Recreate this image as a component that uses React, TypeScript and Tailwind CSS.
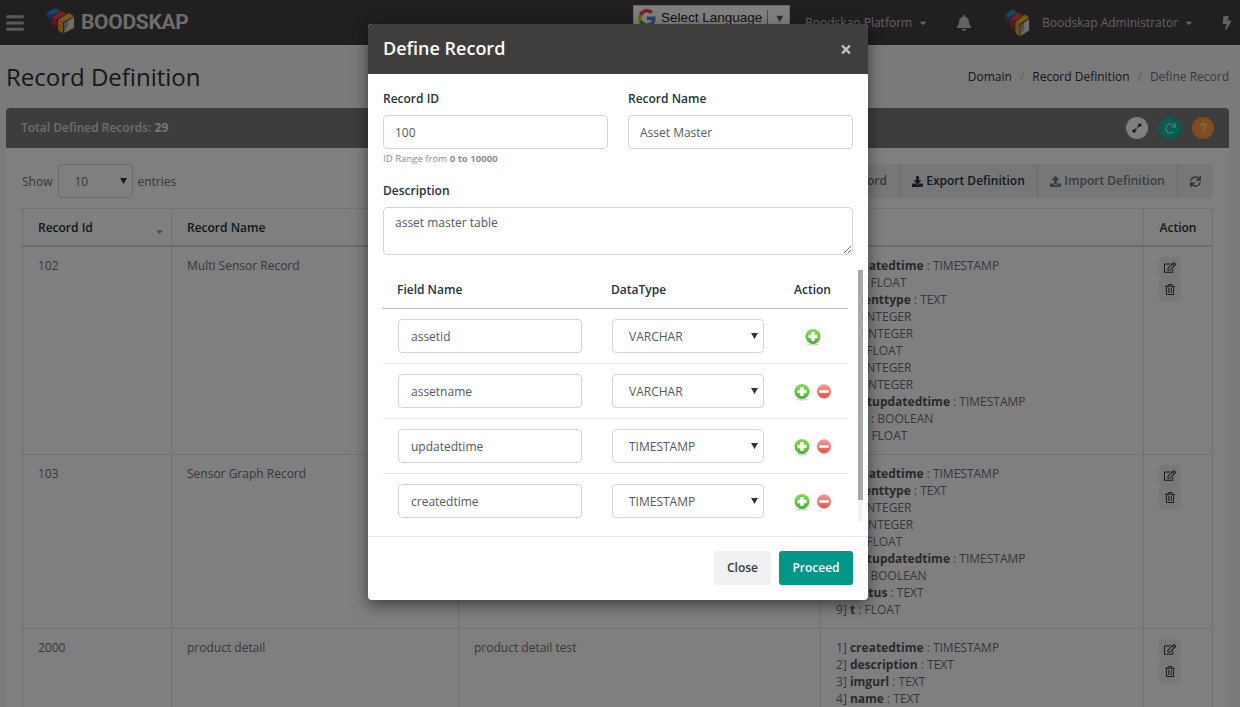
import React from 'react';
import { FaBars, FaBell, FaBolt, FaCaretDown, FaDownload, FaExpandAlt, FaQuestion, FaRedo, FaRegEdit, FaRegTrashAlt, FaSortDown, FaSync, FaTimes, FaUpload } from 'react-icons/fa';

type Field = [string, string];

const rows: { id: string; name: string; desc: string; fields: Field[] }[] = [
  {
    id: '102',
    name: 'Multi Sensor Record',
    desc: 'multi sensor record',
    fields: [
      ['createdtime', 'TIMESTAMP'],
      ['st', 'FLOAT'],
      ['eventtype', 'TEXT'],
      ['i', 'INTEGER'],
      ['r', 'INTEGER'],
      ['x', 'FLOAT'],
      ['i', 'INTEGER'],
      ['r', 'INTEGER'],
      ['lastupdatedtime', 'TIMESTAMP'],
      ['st', 'BOOLEAN'],
      ['t', 'FLOAT'],
    ],
  },
  {
    id: '103',
    name: 'Sensor Graph Record',
    desc: 'sensor graph record',
    fields: [
      ['createdtime', 'TIMESTAMP'],
      ['eventtype', 'TEXT'],
      ['i', 'INTEGER'],
      ['r', 'INTEGER'],
      ['x', 'FLOAT'],
      ['lastupdatedtime', 'TIMESTAMP'],
      ['st', 'BOOLEAN'],
      ['status', 'TEXT'],
      ['t', 'FLOAT'],
    ],
  },
  {
    id: '2000',
    name: 'product detail',
    desc: 'product detail test',
    fields: [
      ['createdtime', 'TIMESTAMP'],
      ['description', 'TEXT'],
      ['imgurl', 'TEXT'],
      ['name', 'TEXT'],
      ['price', 'FLOAT'],
    ],
  },
];

const defineFields = [
  { name: 'assetid', type: 'VARCHAR', first: true },
  { name: 'assetname', type: 'VARCHAR', first: false },
  { name: 'updatedtime', type: 'TIMESTAMP', first: false },
  { name: 'createdtime', type: 'TIMESTAMP', first: false },
];

function Logo({ className }: { className: string }) {
  return (
    <svg viewBox="0 0 29 26" preserveAspectRatio="none" className={className}>
      <polygon points="0,5 9,0 14,3 5,8" fill="#2f8fd0" />
      <polygon points="0,5 5,8 5,12 0,9" fill="#1e6aa0" />
      <polygon points="6,9 15,3 21,6 11,11" fill="#e8404a" />
      <polygon points="6,9 11,11 11,19 6,16" fill="#c9303c" />
      <polygon points="12,12 23,5 28,8 17,14" fill="#f0b429" />
      <polygon points="12,12 17,14 17,26 12,22" fill="#e0a020" />
      <polygon points="18,15 28,9 28,20 18,25" fill="#d8d8d8" />
      <polygon points="18,15 22,13 22,18 18,25" fill="#9a9a9a" />
    </svg>
  );
}

function GoogleG() {
  return (
    <svg viewBox="0 0 48 48" className="w-[18px] h-[18px]">
      <path fill="#EA4335" d="M24 9.5c3.5 0 6.700 1.200 9.200 3.600l6.900-6.900C35.900 2.400 30.500 0 24 0 14.600 0 6.500 5.400 2.600 13.200l8 6.200C12.500 13.700 17.800 9.500 24 9.500z" />
      <path fill="#4285F4" d="M47 24.500c0-1.600-.1-3.100-.4-4.500H24v9h12.900c-.6 3-2.200 5.500-4.700 7.200l7.700 6C44.400 38.300 47 32 47 24.500z" />
      <path fill="#FBBC05" d="M10.600 28.600c-.5-1.400-.8-3-.8-4.600s.3-3.200.8-4.600l-8-6.200C.9 16.500 0 20.100 0 24s.9 7.500 2.600 10.800l8-6.200z" />
      <path fill="#34A853" d="M24 48c6.500 0 11.900-2.100 15.900-5.800l-7.700-6c-2.200 1.400-4.900 2.300-8.200 2.300-6.200 0-11.500-4.200-13.400-9.900l-8 6.200C6.500 42.600 14.600 48 24 48z" />
    </svg>
  );
}

function RoundIcon({ kind }: { kind: 'plus' | 'minus' }) {
  const plus = kind === 'plus';
  const id = plus ? 'greenball' : 'redball';
  return (
    <svg viewBox="0 0 18 18" className="w-[18px] h-[18px]">
      <defs>
        <linearGradient id={id} x1="0" y1="0" x2="0" y2="1">
          <stop offset="0" stopColor={plus ? '#86dc54' : '#f79a90'} />
          <stop offset="1" stopColor={plus ? '#4aae30' : '#e2504a'} />
        </linearGradient>
      </defs>
      {plus && <ellipse cx="9" cy="16.500" rx="6.500" ry="1.200" fill="#d6dad6" />}
      {plus ? (
        <circle cx="9" cy="8.500" r="7.500" fill={`url(#${id})`} />
      ) : (
        <circle cx="9" cy="8.500" r="7" fill={`url(#${id})`} stroke="#f5b8b2" strokeWidth="0.800" />
      )}
      {plus ? (
        <path d="M7.300 4h3.400v2.800h2.800v3.400h-2.800V13H7.300v-2.800H4.500V6.800h2.800z" fill="#fff" />
      ) : (
        <rect x="4.200" y="7.200" width="9.600" height="2.600" rx="0.500" fill="#fff" />
      )}
    </svg>
  );
}

function SelectArrow({ className }: { className: string }) {
  return (
    <svg viewBox="0 0 8 7" className={`absolute w-[7px] h-[6px] pointer-events-none ${className}`}>
      <polygon points="0,0 8,0 4,7" fill="#333" />
    </svg>
  );
}

function Navbar() {
  return (
    <div className="h-[45px] bg-[#423f40] flex items-center text-[#c4c4c4] text-[12px] whitespace-nowrap">
      <FaBars className="ml-[6px] w-[18px] h-[20px] text-[#b5b5b5]" />
      <Logo className="ml-[22px] w-[29px] h-[26px] -mt-[3px]" />
      <span className="ml-[6px] w-[107px] text-[21px] font-bold tracking-[-0.3px] text-[#d8d8d8] [font-family:'Roboto',sans-serif]">BOODSKAP</span>
      <div className="ml-[445px] self-start mt-[5px] w-[157px] h-[26px] shrink-0 bg-white border border-[#ccc] flex items-center pl-[4px] text-[13.500px] text-[#222] [font-family:'Liberation_Sans',sans-serif]">
        <GoogleG />
        <span className="ml-[5px]">Select Language</span>
        <span className="ml-[5px] w-px h-[16px] bg-[#999]" />
        <span className="ml-[6px] text-[11px] text-[#555]">▼</span>
      </div>
      <span className="ml-[15px] w-[110px] shrink-0">Boodskap Platform</span>
      <FaCaretDown className="ml-[3px] w-[10px] h-[10px] shrink-0" />
      <FaBell className="ml-[28px] w-[16px] h-[16px] shrink-0" />
      <Logo className="ml-[33px] w-[25px] h-[28px] shrink-0" />
      <span className="ml-[12px] w-[139px] shrink-0">Boodskap Administrator</span>
      <FaCaretDown className="ml-[3px] w-[10px] h-[10px] shrink-0" />
      <FaBolt className="ml-[28px] w-[10px] h-[14px] shrink-0" />
    </div>
  );
}

function CircleButton({ className, children }: { className: string; children: React.ReactNode }) {
  return <span className={`w-[22px] h-[22px] rounded-full flex items-center justify-center ${className}`}>{children}</span>;
}

function RecordTable() {
  return (
    <table className="w-[1190px] table-fixed border-collapse text-[12px] text-[#6f6f76]">
      <colgroup>
        <col className="w-[149px]" />
        <col className="w-[287px]" />
        <col className="w-[362px]" />
        <col className="w-[323px]" />
        <col className="w-[69px]" />
      </colgroup>
      <thead>
        <tr className="h-[37px] border-b-2 border-[#cfd8dc] text-left text-[#263238] font-semibold">
          <th className="relative border border-[#dee2e6] border-b-[#cfd8dc] px-[15px] pt-[3px] font-semibold">
            Record Id
            <FaSortDown className="absolute right-[6px] top-[15px] w-[11px] h-[11px] text-[#999]" />
          </th>
          <th className="border border-[#dee2e6] border-b-[#cfd8dc] px-[15px] pt-[3px] font-semibold">Record Name</th>
          <th className="border border-[#dee2e6] border-b-[#cfd8dc] px-[15px] pt-[3px] font-semibold">Description</th>
          <th className="border border-[#dee2e6] border-b-[#cfd8dc] px-[15px] pt-[3px] font-semibold">Field</th>
          <th className="border border-[#dee2e6] border-b-[#cfd8dc] pt-[3px] text-center font-semibold">Action</th>
        </tr>
      </thead>
      <tbody>
        {rows.map((row) => (
          <tr key={row.id} className="align-top">
            <td className="border border-[#dee2e6] px-[15px] py-[10px] leading-[17px]">{row.id}</td>
            <td className="border border-[#dee2e6] px-[15px] py-[10px] leading-[17px]">{row.name}</td>
            <td className="border border-[#dee2e6] px-[15px] py-[10px] leading-[17px]">{row.desc}</td>
            <td className="border border-[#dee2e6] px-[15px] py-[10px] leading-[17px]">
              {row.fields.map((f, i) => (
                <div key={i}>
                  {i + 1}] <b className="font-bold text-[#54545a]">{f[0]}</b> : {f[1]}
                </div>
              ))}
            </td>
            <td className="border border-[#dee2e6] pl-[15px] py-[10px]">
              <div className="flex flex-col items-start text-[#333]">
                <span className="w-[22px] h-[22px] bg-[#eef0f0] rounded-[3px] flex items-center justify-center">
                  <FaRegEdit className="w-[12px] h-[11px]" />
                </span>
                <span className="w-[22px] h-[22px] bg-[#eef0f0] rounded-[3px] flex items-center justify-center">
                  <FaRegTrashAlt className="w-[10px] h-[11px]" />
                </span>
              </div>
            </td>
          </tr>
        ))}
      </tbody>
    </table>
  );
}

function Page() {
  return (
    <div className="bg-[#f4f4f4] h-[662px] overflow-hidden pl-[6px] pr-[11px]">
      <div className="h-[63px] flex items-center justify-between">
        <h1 className="text-[24px] text-[#263238]">Record Definition</h1>
        <div className="text-[12px] flex gap-[8px] text-[#263238] mt-[1px]">
          <span>Domain</span>
          <span className="text-[#bbb]">/</span>
          <span>Record Definition</span>
          <span className="text-[#bbb]">/</span>
          <span className="text-[#6c757d]">Define Record</span>
        </div>
      </div>
      <div className="bg-white rounded-t-[4px] h-[700px]">
        <div className="h-[40px] bg-[#7a7a7a] rounded-t-[4px] flex items-center pl-[15px] pr-[15px] text-[12px] text-[#d9d9d9] font-semibold">
          <span>Total Defined Records: <b className="font-bold text-[#eee]">29</b></span>
          <div className="ml-auto flex gap-[11px]">
            <CircleButton className="bg-white text-[#123]"><FaExpandAlt className="w-[10px] h-[10px]" /></CircleButton>
            <CircleButton className="bg-[#00bcaa] text-[#b8dcd8]"><FaRedo className="w-[11px] h-[11px]" /></CircleButton>
            <CircleButton className="bg-[#ff9a3c] text-[#ffcf9a]"><FaQuestion className="w-[9px] h-[10px]" /></CircleButton>
          </div>
        </div>
        <div className="px-[16px] pt-[16px]">
          <div className="flex items-center h-[34px] text-[12px] text-[#6f6f76]">
            <span className="pt-[1px]">Show</span>
            <div className="relative ml-[6px] w-[75px] h-[34px]">
              <select defaultValue="10" className="appearance-none w-full h-full border border-[#ced4da] rounded-[4px] pl-[15px] pt-[2px] bg-white outline-none">
                <option>10</option>
              </select>
              <SelectArrow className="right-[6px] top-[14px]" />
            </div>
            <span className="ml-[4px] pt-[1px]">entries</span>
            <div className="ml-auto h-[34px] w-[355px] bg-[#eceff1] rounded-[4px] flex items-center text-[12px] font-semibold">
              <span className="w-[41px] text-right pr-[12px] text-[#6f6f76] shrink-0 overflow-hidden">ord</span>
              <span className="w-[138px] h-full border-l border-[#cfd4d6] flex items-center justify-center gap-[3px] text-[#263238]">
                <FaDownload className="w-[11px] h-[11px]" /> Export Definition
              </span>
              <span className="w-[140px] h-full border-l border-[#cfd4d6] flex items-center justify-center gap-[3px] text-[#77777d]">
                <FaUpload className="w-[11px] h-[11px]" /> Import Definition
              </span>
              <span className="flex-1 h-full border-l border-[#cfd4d6] flex items-center justify-center text-[#666]">
                <FaSync className="w-[11px] h-[11px]" />
              </span>
            </div>
          </div>
          <div className="mt-[10px]">
            <RecordTable />
          </div>
        </div>
      </div>
    </div>
  );
}

function DefineRecordModal() {
  const inputCls = 'h-[34px] w-full border border-[#d0d6de] rounded-[4px] px-[11px] text-[#55595c] bg-white outline-none';
  return (
    <div className="absolute inset-0 bg-black/50 flex justify-center items-start pt-[24px] pr-[4px]">
      <div className="w-[500px] bg-white rounded-[4px] shadow-[0_5px_15px_rgba(0,0,0,0.5)] text-[12px] overflow-hidden">
        <div className="h-[50px] bg-[#403e3c] flex items-center justify-between px-[15px] text-white">
          <span className="text-[18px] font-semibold -mt-[2px]">Define Record</span>
          <FaTimes className="w-[12px] h-[13px] text-[#c0c0c0] mr-[1px]" />
        </div>
        <div className="relative">
          <div className="px-[15px] pt-[16px]">
            <div className="grid grid-cols-2 gap-[20px]">
              <div>
                <div className="font-semibold text-[#263238] leading-[17px] mb-[8px]">Record ID</div>
                <input defaultValue="100" className={inputCls} />
                <div className="text-[9.600px] leading-[13px] mt-[3px] text-[#868e96]">
                  ID Range from <b className="font-bold">0 to 10000</b>
                </div>
              </div>
              <div>
                <div className="font-semibold text-[#263238] leading-[17px] mb-[8px]">Record Name</div>
                <input defaultValue="Asset Master" className={inputCls} />
              </div>
            </div>
            <div className="font-semibold text-[#263238] leading-[17px] mt-[17px] mb-[8px]">Description</div>
            <textarea defaultValue="asset master table" className="block w-full h-[48px] border border-[#d0d6de] rounded-[4px] px-[11px] py-[6px] text-[#55595c] outline-none" />
          </div>
          <div className="mt-[15px] h-[251px] overflow-hidden pl-[15px] pr-[20px]">
            <div className="h-[39px] pt-[2px] border-b border-[#b0bec5] grid grid-cols-[214px_180px_71px] items-center font-semibold text-[#263238]">
              <span className="pl-[14px]">Field Name</span>
              <span className="pl-[14px]">DataType</span>
              <span className="text-center">Action</span>
            </div>
            {defineFields.map((f) => (
              <div key={f.name} className="h-[55px] border-b border-[#e4e8ea] grid grid-cols-[214px_180px_71px] items-center">
                <div className="pl-[15px]">
                  <input defaultValue={f.name} className="block h-[34px] w-[184px] border border-[#d0d6de] rounded-[4px] px-[12px] text-[#55595c] outline-none" />
                </div>
                <div className="relative ml-[15px] w-[152px] h-[34px]">
                  <select defaultValue={f.type} className="appearance-none w-full h-full border border-[#d0d6de] rounded-[4px] pl-[16px] pt-[2px] text-[#55595c] bg-white outline-none">
                    <option>VARCHAR</option>
                    <option>TIMESTAMP</option>
                  </select>
                  <SelectArrow className="right-[6px] top-[14px]" />
                </div>
                <div className="flex items-center justify-center gap-[4px] pt-[2px]">
                  <RoundIcon kind="plus" />
                  {!f.first && <RoundIcon kind="minus" />}
                </div>
              </div>
            ))}
          </div>
          <div className="absolute right-[5px] bottom-0 top-[196px] w-[5px] bg-[#f1f1f1]">
            <div className="w-full h-[230px] bg-[#a8a8a8]" />
          </div>
        </div>
        <div className="mt-[15px] h-[64px] border-t border-[#e4e8ea] flex items-start pt-[14px] justify-end gap-[8px] px-[15px]">
          <span className="w-[57px] h-[34px] bg-[#f0f1f1] rounded-[3px] flex items-center justify-center font-semibold text-[#343a40]">Close</span>
          <span className="w-[74px] h-[34px] bg-[#009688] rounded-[3px] flex items-center justify-center font-semibold text-white">Proceed</span>
        </div>
      </div>
    </div>
  );
}

export default function App() {
  return (
    <div className="relative w-[1240px] h-[707px] overflow-hidden [font-family:'Open_Sans',sans-serif]">
      <Navbar />
      <Page />
      <DefineRecordModal />
    </div>
  );
}
